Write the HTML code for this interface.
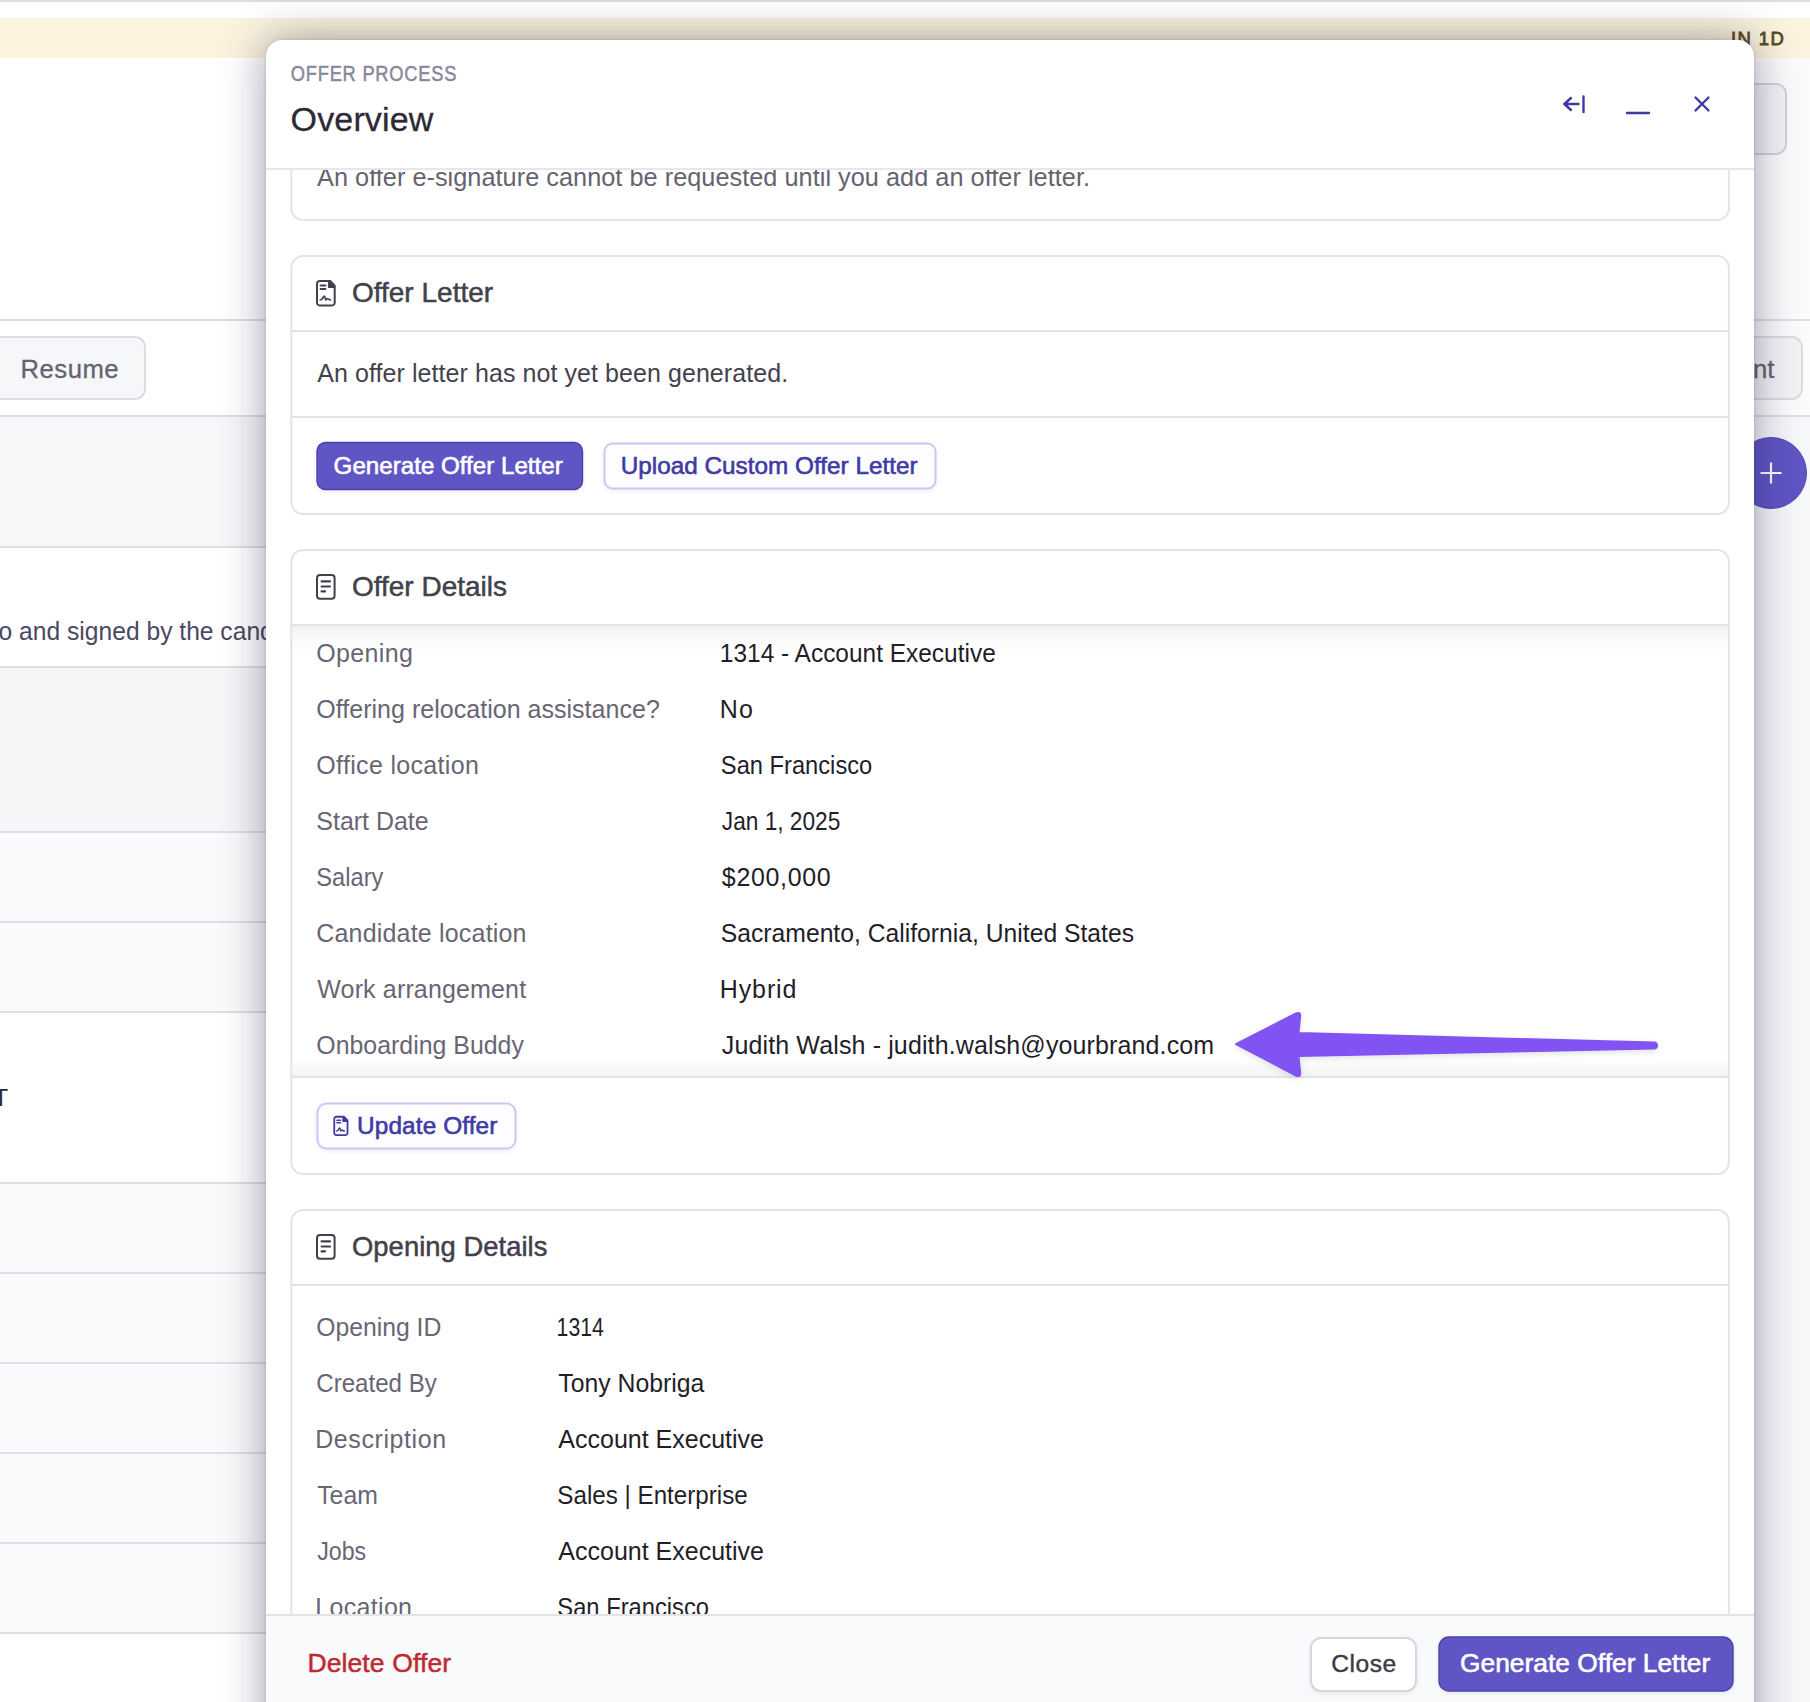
<!DOCTYPE html>
<html><head><meta charset="utf-8"><title>Offer Process - Overview</title>
<style>
html,body{margin:0;padding:0;width:1810px;height:1702px;overflow:hidden;background:#fff;position:relative}
svg text{font-family:"Liberation Sans", sans-serif}
</style></head><body>
<svg id="bg" width="1810" height="1702" viewBox="0 0 1810 1702" style="position:absolute;left:0;top:0">
<rect x="0" y="0" width="1810" height="1702" fill="#ffffff"/>
<rect x="0" y="0" width="1810" height="2" fill="#d8dbe2"/>
<rect x="0" y="18" width="1810" height="40" fill="#fbf3dd"/>
<rect x="0" y="417" width="266" height="130" fill="#f6f7f9"/>
<rect x="0" y="668" width="266" height="164" fill="#f5f6f8"/>
<rect x="0" y="833" width="266" height="179" fill="#f9fafb"/>
<rect x="0" y="1184" width="266" height="449" fill="#f9fafb"/>
<rect x="0" y="319" width="266" height="2" fill="#dedee6"/>
<rect x="0" y="415" width="266" height="2" fill="#dedee6"/>
<rect x="0" y="546" width="266" height="2" fill="#dedee6"/>
<rect x="0" y="666" width="266" height="2" fill="#dedee6"/>
<rect x="0" y="831" width="266" height="2" fill="#dedee6"/>
<rect x="0" y="921" width="266" height="2" fill="#dedee6"/>
<rect x="0" y="1011" width="266" height="2" fill="#dedee6"/>
<rect x="0" y="1182" width="266" height="2" fill="#dedee6"/>
<rect x="0" y="1272" width="266" height="2" fill="#dedee6"/>
<rect x="0" y="1362" width="266" height="2" fill="#dedee6"/>
<rect x="0" y="1452" width="266" height="2" fill="#dedee6"/>
<rect x="0" y="1542" width="266" height="2" fill="#dedee6"/>
<rect x="0" y="1632" width="266" height="2" fill="#dedee6"/>
<rect x="1754" y="58" width="56" height="1644" fill="#f6f7f9"/>
<rect x="1754" y="58" width="56" height="261" fill="#fbfbfc"/>
<rect x="1754" y="319" width="56" height="2" fill="#dedee6"/>
<rect x="1754" y="415" width="56" height="2" fill="#dedee6"/>
<rect x="1754" y="321" width="56" height="94" fill="#fbfbfc"/>
<rect x="-20" y="337" width="165" height="62" fill="#f6f7f9" rx="10" stroke="#dcdce4" stroke-width="2"/>
<text x="20.50" y="378" font-size="25.7" fill="#65636f" textLength="98.16" lengthAdjust="spacing" stroke="#65636f" stroke-width="0.3">Resume</text>
<text transform="translate(-1.47,0) scale(0.9664,1)" x="0" y="640" font-size="25.5" fill="#4a4862">o and signed by the cand</text>
<text x="-6.50" y="1106" font-size="24" fill="#2a2a33">T</text>
<rect x="1700" y="84" width="86" height="70" fill="#f3f3f6" rx="10" stroke="#d2d2dc" stroke-width="2"/>
<rect x="1700" y="337" width="102" height="62" fill="#f3f3f6" rx="10" stroke="#dcdce4" stroke-width="2"/>
<text x="1753.00" y="378" font-size="25.7" fill="#65636f" stroke="#65636f" stroke-width="0.3">nt</text>
<circle cx="1771" cy="473" r="35.5" fill="#5f55c5" stroke="#4f47b0" stroke-width="1"/>
<path d="M1760.5 473 H1781.5 M1771 462.5 V483.5" stroke="#ffffff" stroke-width="2.2"/>
<text x="1731.00" y="44.9" font-size="18.5" fill="#5a4a22" textLength="52.80" lengthAdjust="spacing" stroke="#5a4a22" stroke-width="0.8">IN 1D</text>
</svg>
<div style="position:absolute;left:266px;top:40px;width:1488px;height:1720px;background:#fff;border-radius:16px 16px 0 0;box-shadow:0 0 44px rgba(30,30,60,0.44),0 0 3px rgba(30,30,60,0.2)"></div>
<svg id="fg" width="1810" height="1702" viewBox="0 0 1810 1702" style="position:absolute;left:0;top:0">
<defs><clipPath id="scroll"><rect x="266" y="170" width="1488" height="1444"/></clipPath><linearGradient id="shTop" x1="0" y1="0" x2="0" y2="1"><stop offset="0" stop-color="#000" stop-opacity="0.06"/><stop offset="0.35" stop-color="#000" stop-opacity="0.025"/><stop offset="1" stop-color="#000" stop-opacity="0"/></linearGradient><linearGradient id="shBot" x1="0" y1="0" x2="0" y2="1"><stop offset="0" stop-color="#000" stop-opacity="0"/><stop offset="1" stop-color="#000" stop-opacity="0.045"/></linearGradient><filter id="arrowsh" x="-20%" y="-50%" width="140%" height="200%"><feDropShadow dx="0" dy="2" stdDeviation="3" flood-color="#000" flood-opacity="0.12"/></filter><filter id="btnsh" x="-10%" y="-30%" width="120%" height="170%"><feDropShadow dx="0" dy="1.5" stdDeviation="2" flood-color="#1e1e3c" flood-opacity="0.08"/></filter></defs>
<text transform="translate(290.80,0) scale(0.84,1)" x="0" y="81" font-size="21.8" fill="#8a879e" textLength="197.18" lengthAdjust="spacing" stroke="#8a879e" stroke-width="0.5">OFFER PROCESS</text>
<text x="290.60" y="131.2" font-size="34" fill="#2b2a35" textLength="142.70" lengthAdjust="spacing" stroke="#2b2a35" stroke-width="0.3">Overview</text>
<g fill="none" stroke="#3d3aa6" stroke-width="2.4" stroke-linecap="round" stroke-linejoin="round"><path d="M1564.5 104 H1578.5 M1571 98 L1564.3 104 L1571 110 M1583.5 96.5 V112"/><path d="M1627 113 H1649"/><path d="M1695.5 97.5 L1708.5 110.5 M1708.5 97.5 L1695.5 110.5"/></g>
<rect x="266" y="168" width="1488" height="2" fill="#e6e6ec"/>
<g clip-path="url(#scroll)">
<rect x="291.3" y="100" width="1437.6" height="120" fill="none" rx="12" stroke="#e3e3ea" stroke-width="2"/>
<text x="317.00" y="186" font-size="25.3" fill="#65636f" textLength="772.96" lengthAdjust="spacing">An offer e-signature cannot be requested until you add an offer letter.</text>
<rect x="291.3" y="256" width="1437.6" height="258" fill="none" rx="12" stroke="#e3e3ea" stroke-width="2"/>
<rect x="291.3" y="330" width="1437.6" height="2" fill="#e3e3ea"/>
<rect x="291.3" y="416" width="1437.6" height="2" fill="#e3e3ea"/>
<text x="351.90" y="302.1" font-size="28" fill="#41414b" textLength="141.21" lengthAdjust="spacing" stroke="#41414b" stroke-width="0.5">Offer Letter</text>
<text x="317.30" y="382.1" font-size="25" fill="#43424e" textLength="470.82" lengthAdjust="spacing">An offer letter has not yet been generated.</text>
<rect x="317" y="442.5" width="265.5" height="47" fill="#5f55c5" rx="8.5" stroke="#4a42ad" stroke-width="1.4" filter="url(#btnsh)"/>
<text transform="translate(333.60,0) scale(0.9987,1)" x="0" y="474" font-size="24.2" fill="#ffffff" stroke="#ffffff" stroke-width="0.6">Generate Offer Letter</text>
<rect x="604.5" y="443.5" width="331" height="45" fill="#fdfdff" rx="8" stroke="#cbc7f5" stroke-width="2" filter="url(#btnsh)"/>
<text x="620.70" y="474" font-size="24.3" fill="#3f3ba5" textLength="296.96" lengthAdjust="spacing" stroke="#3f3ba5" stroke-width="0.6">Upload Custom Offer Letter</text>
<rect x="291.3" y="550" width="1437.6" height="624" fill="none" rx="12" stroke="#e3e3ea" stroke-width="2"/>
<rect x="291.3" y="624" width="1437.6" height="2" fill="#e3e3ea"/>
<rect x="292.3" y="626" width="1435.6" height="26" fill="url(#shTop)"/>
<rect x="292.3" y="1058" width="1435.6" height="18" fill="url(#shBot)"/>
<rect x="291.3" y="1076" width="1437.6" height="2" fill="#e3e3ea"/>
<text x="351.90" y="596" font-size="28" fill="#41414b" textLength="155.19" lengthAdjust="spacing" stroke="#41414b" stroke-width="0.5">Offer Details</text>
<text x="316.30" y="661.8" font-size="25" fill="#686673" textLength="96.53" lengthAdjust="spacing">Opening</text>
<text transform="translate(719.84,0) scale(0.9785,1)" x="0" y="661.8" font-size="25" fill="#1f1e29">1314 - Account Executive</text>
<text x="316.30" y="717.8" font-size="25" fill="#686673" textLength="343.50" lengthAdjust="spacing">Offering relocation assistance?</text>
<text x="719.80" y="717.8" font-size="25" fill="#1f1e29" textLength="33.17" lengthAdjust="spacing">No</text>
<text x="316.30" y="773.8" font-size="25" fill="#686673" textLength="162.57" lengthAdjust="spacing">Office location</text>
<text transform="translate(720.85,0) scale(0.9481,1)" x="0" y="773.8" font-size="25" fill="#1f1e29">San Francisco</text>
<text transform="translate(316.30,0) scale(0.9991,1)" x="0" y="829.8" font-size="25" fill="#686673">Start Date</text>
<text transform="translate(721.80,0) scale(0.9069,1)" x="0" y="829.8" font-size="25" fill="#1f1e29">Jan 1, 2025</text>
<text transform="translate(316.35,0) scale(0.9457,1)" x="0" y="885.8" font-size="25" fill="#686673">Salary</text>
<text x="721.80" y="885.8" font-size="25" fill="#1f1e29" textLength="108.98" lengthAdjust="spacing">$200,000</text>
<text x="316.30" y="941.8" font-size="25" fill="#686673" textLength="210.19" lengthAdjust="spacing">Candidate location</text>
<text transform="translate(720.81,0) scale(0.9882,1)" x="0" y="941.8" font-size="25" fill="#1f1e29">Sacramento, California, United States</text>
<text x="317.30" y="997.8" font-size="25" fill="#686673" textLength="208.78" lengthAdjust="spacing">Work arrangement</text>
<text x="719.80" y="997.8" font-size="25" fill="#1f1e29" textLength="76.65" lengthAdjust="spacing">Hybrid</text>
<text transform="translate(316.30,0) scale(0.9962,1)" x="0" y="1053.8" font-size="25" fill="#686673">Onboarding Buddy</text>
<text x="721.80" y="1053.8" font-size="25" fill="#1f1e29" textLength="492.37" lengthAdjust="spacing">Judith Walsh - judith.walsh@yourbrand.com</text>
<rect x="317.5" y="1103.5" width="198" height="45" fill="#fdfdff" rx="9" stroke="#cbc7f5" stroke-width="2" filter="url(#btnsh)"/>
<text x="357.00" y="1134" font-size="24.4" fill="#3f3ba5" textLength="140.40" lengthAdjust="spacing" stroke="#3f3ba5" stroke-width="0.6">Update Offer</text>
<rect x="291.3" y="1210" width="1437.6" height="600" fill="none" rx="12" stroke="#e3e3ea" stroke-width="2"/>
<rect x="291.3" y="1284" width="1437.6" height="2" fill="#e3e3ea"/>
<text x="352.00" y="1256" font-size="27.4" fill="#41414b" textLength="195.41" lengthAdjust="spacing" stroke="#41414b" stroke-width="0.5">Opening Details</text>
<text transform="translate(316.21,0) scale(0.9896,1)" x="0" y="1336.2" font-size="25" fill="#686673">Opening ID</text>
<text transform="translate(556.60,0) scale(0.8491,1)" x="0" y="1336.2" font-size="25" fill="#1f1e29">1314</text>
<text transform="translate(316.24,0) scale(0.9637,1)" x="0" y="1392.2" font-size="25" fill="#686673">Created By</text>
<text transform="translate(558.30,0) scale(0.9926,1)" x="0" y="1392.2" font-size="25" fill="#1f1e29">Tony Nobriga</text>
<text x="315.20" y="1448.2" font-size="25" fill="#686673" textLength="130.86" lengthAdjust="spacing">Description</text>
<text x="558.30" y="1448.2" font-size="25" fill="#1f1e29" textLength="205.67" lengthAdjust="spacing">Account Executive</text>
<text transform="translate(317.20,0) scale(0.9933,1)" x="0" y="1504.2" font-size="25" fill="#686673">Team</text>
<text transform="translate(557.33,0) scale(0.9677,1)" x="0" y="1504.2" font-size="25" fill="#1f1e29">Sales | Enterprise</text>
<text transform="translate(317.20,0) scale(0.9288,1)" x="0" y="1560.2" font-size="25" fill="#686673">Jobs</text>
<text x="558.30" y="1560.2" font-size="25" fill="#1f1e29" textLength="205.67" lengthAdjust="spacing">Account Executive</text>
<text x="315.20" y="1616.2" font-size="25" fill="#686673" textLength="96.83" lengthAdjust="spacing">Location</text>
<text transform="translate(557.35,0) scale(0.9494,1)" x="0" y="1616.2" font-size="25" fill="#1f1e29">San Francisco</text>
</g>
<g transform="translate(316,280) scale(1.0)" fill="none" stroke="#41414b" stroke-width="2" stroke-linecap="round" stroke-linejoin="round"><path d="M4 1 H14.2 L18.7 5.8 V22.7 A2.7 2.7 0 0 1 16 25.4 H3.7 A2.7 2.7 0 0 1 1 22.7 V3.7 A2.7 2.7 0 0 1 3.7 1 Z"/><path d="M12.6 1.2 V7.2 H18.5 Z" fill="#41414b" stroke-width="1.4"/><path d="M4.5 5.5 H9.5 M4.5 9 H9.5" stroke-width="1.8"/><path d="M4.3 20 C6.5 20 7.5 16 8.3 16 C9.2 16 9.2 20 9.8 20 C10.5 20 10.7 18.5 11.4 18.5 C12.2 18.5 13 20 14.5 20" stroke-width="1.7"/></g>
<g transform="translate(316,574)" fill="none" stroke="#41414b" stroke-width="2" stroke-linecap="round" stroke-linejoin="round"><rect x="1" y="1" width="17.6" height="23.7" rx="3"/><path d="M5.6 7.4 H14.0 M5.6 12.5 H14.0 M5.6 17.4 H9.0" stroke-width="2.2"/></g>
<g transform="translate(316,1234)" fill="none" stroke="#41414b" stroke-width="2" stroke-linecap="round" stroke-linejoin="round"><rect x="1" y="1" width="17.6" height="23.7" rx="3"/><path d="M5.6 7.4 H14.0 M5.6 12.5 H14.0 M5.6 17.4 H9.0" stroke-width="2.2"/></g>
<g transform="translate(333.5,1116) scale(0.75)" fill="none" stroke="#3f3ba5" stroke-width="2.4" stroke-linecap="round" stroke-linejoin="round"><path d="M4 1 H14.2 L18.7 5.8 V22.7 A2.7 2.7 0 0 1 16 25.4 H3.7 A2.7 2.7 0 0 1 1 22.7 V3.7 A2.7 2.7 0 0 1 3.7 1 Z"/><path d="M12.6 1.2 V7.2 H18.5 Z" fill="#3f3ba5" stroke-width="1.6"/><path d="M4.5 5.5 H9.5 M4.5 9 H9.5" stroke-width="2"/><path d="M4.3 20 C6.5 20 7.5 16 8.3 16 C9.2 16 9.2 20 9.8 20 C10.5 20 10.7 18.5 11.4 18.5 C12.2 18.5 13 20 14.5 20" stroke-width="2"/></g>
<g filter="url(#arrowsh)"><path d="M1236 1044.2 L1296 1013.5 Q1300.5 1011.5 1300.2 1016 L1298.5 1033 L1654 1042.6 Q1657 1042.8 1657 1045.6 Q1657 1048.4 1654 1048.6 L1298.5 1056 L1300.2 1073 Q1300.5 1077.5 1296 1075.5 Z" fill="#8153f3" stroke="#8153f3" stroke-width="2" stroke-linejoin="round"/></g>
<rect x="266" y="1614" width="1488" height="88" fill="#f9fafb"/>
<rect x="266" y="1614" width="1488" height="2" fill="#e2e2e8"/>
<text x="307.40" y="1671.9" font-size="26.5" fill="#c0292f" textLength="143.69" lengthAdjust="spacing" stroke="#c0292f" stroke-width="0.5">Delete Offer</text>
<rect x="1311" y="1638" width="105" height="53" fill="#ffffff" rx="10" stroke="#d6d6de" stroke-width="2" filter="url(#btnsh)"/>
<text x="1331.30" y="1672.2" font-size="24.6" fill="#3a3a45" textLength="64.79" lengthAdjust="spacing" stroke="#3a3a45" stroke-width="0.4">Close</text>
<rect x="1439" y="1637" width="294" height="54" fill="#5f55c5" rx="10" stroke="#4a42ad" stroke-width="1.4" filter="url(#btnsh)"/>
<text x="1460.00" y="1672.2" font-size="26.3" fill="#ffffff" textLength="250.18" lengthAdjust="spacing" stroke="#ffffff" stroke-width="0.6">Generate Offer Letter</text>
</svg>
</body></html>
